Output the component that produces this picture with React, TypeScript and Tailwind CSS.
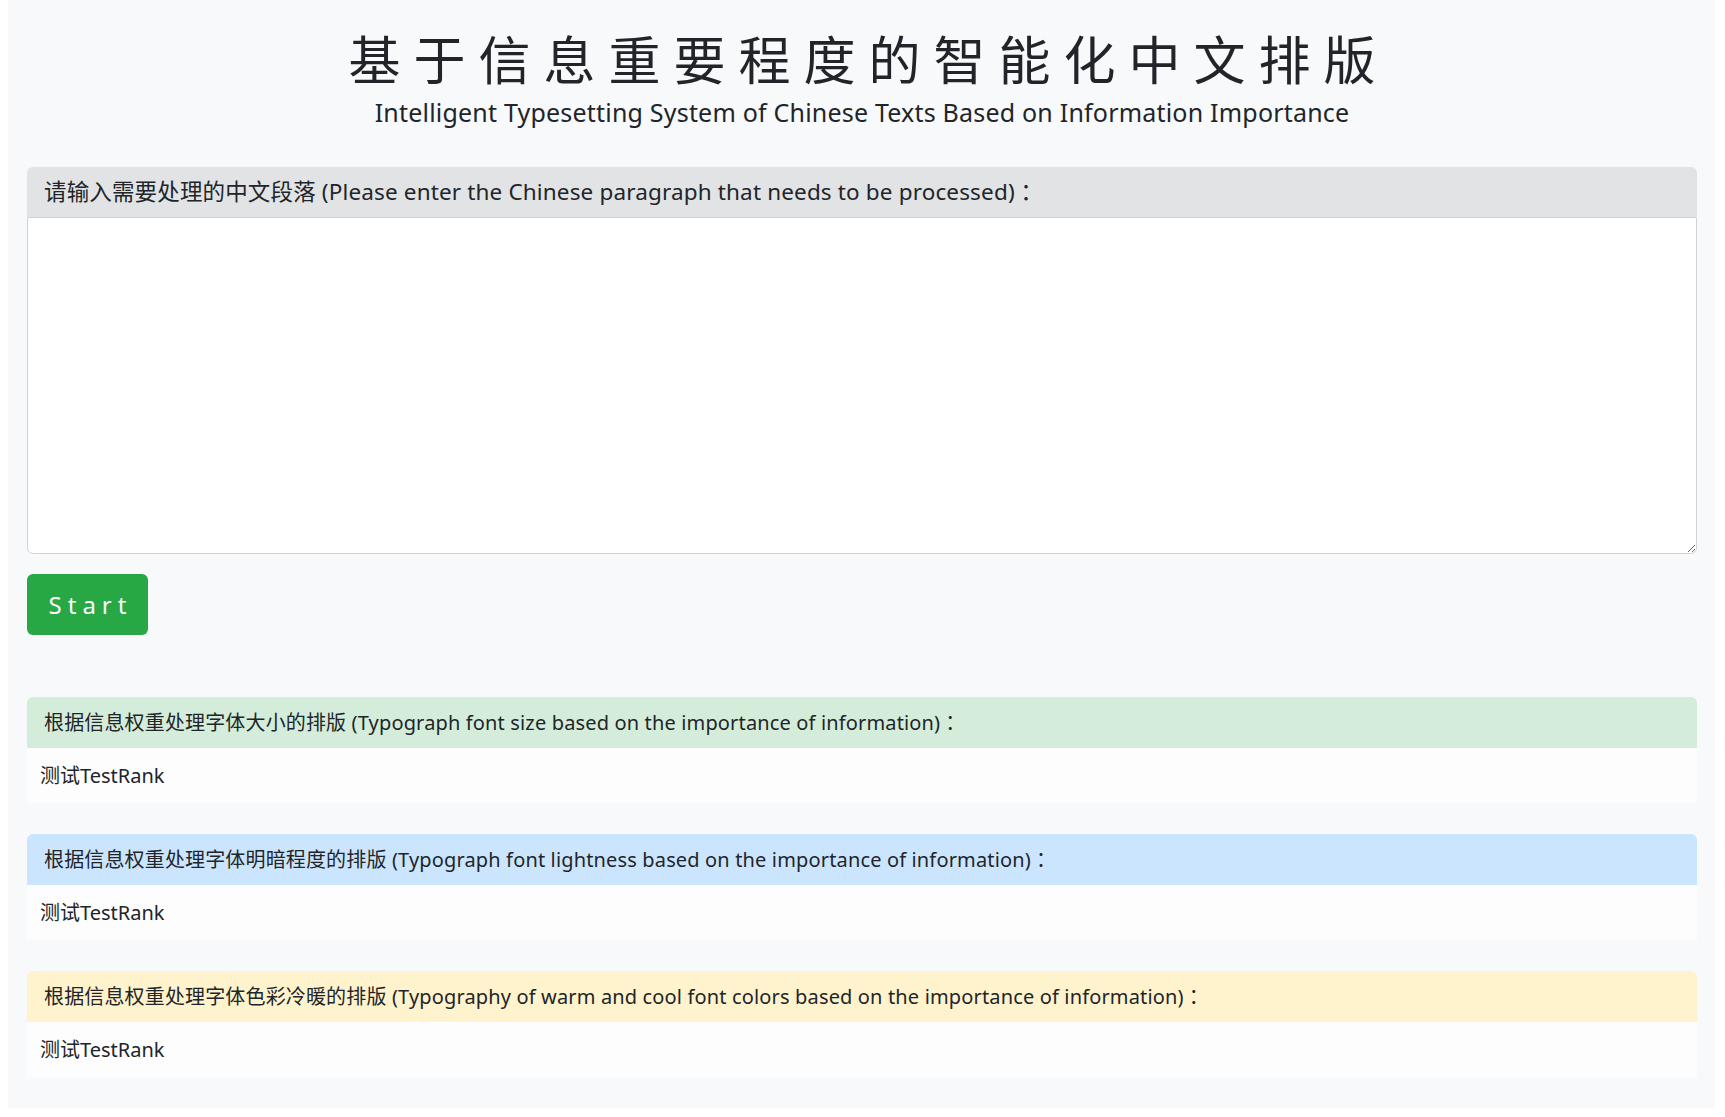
import React from "react";

const FONT = "font-['Segoe_UI','Noto_Sans','Noto_Sans_CJK_SC',sans-serif]";

// full-width colon centred like the reference (TC glyph)
const Colon = () => <span className="font-['Noto_Sans_CJK_TC',sans-serif]">：</span>;

const ResultCard = ({ title, headerBg }: { title: string; headerBg: string }) => (
  <div className="rounded-t-md overflow-hidden">
    <div className={`${headerBg} h-[51px] flex items-center pl-[17px] text-[20px] tracking-[0.15px] text-[#212529]`}>
      {title}
      <Colon />
    </div>
    <div className="bg-[#fdfdfd] h-[55px] flex items-center pl-[13px] text-[20px] text-[#212529]">测试TestRank</div>
  </div>
);

export default function App() {
  return (
    <div className={`min-h-screen bg-white pl-2 pr-[10px] pb-2 ${FONT}`}>
      <div className="bg-[#f8f9fa] pl-[19px] pr-[18px] pb-[31px]">
        {/* header */}
        <div className="flex flex-col items-center pt-[28px]">
          <h1 className="text-[52px] leading-[64px] tracking-[13px] pl-[13px] text-[#212529]">基于信息重要程度的智能化中文排版</h1>
          <p className="text-[25px] leading-[32px] tracking-[0.2px] text-[#212529] mt-[4px]">
            Intelligent Typesetting System of Chinese Texts Based on Information Importance
          </p>
        </div>

        {/* input */}
        <div className="mt-[39px]">
          <div className="bg-[#e2e3e5] h-[50px] rounded-t-md flex items-center pl-[17px] text-[22.5px] tracking-[0.15px] text-[#212529]">
            请输入需要处理的中文段落 (Please enter the Chinese paragraph that needs to be processed)
            <Colon />
          </div>
          <textarea className="block w-full h-[337px] bg-white border border-[#ced4da] rounded-b-md outline-none p-3 text-[20px]" />
        </div>

        <button className="mt-[20px] w-[121px] h-[61px] rounded-md bg-[#28a745] text-white text-[24px] tracking-[6px] pl-[6px]">
          Start
        </button>

        <div className="mt-[62px] flex flex-col gap-[31px]">
          <ResultCard headerBg="bg-[#d4edda]" title="根据信息权重处理字体大小的排版 (Typograph font size based on the importance of information)" />
          <ResultCard headerBg="bg-[#cce5ff]" title="根据信息权重处理字体明暗程度的排版 (Typograph font lightness based on the importance of information)" />
          <ResultCard headerBg="bg-[#fff3cd]" title="根据信息权重处理字体色彩冷暖的排版 (Typography of warm and cool font colors based on the importance of information)" />
        </div>
      </div>
    </div>
  );
}
